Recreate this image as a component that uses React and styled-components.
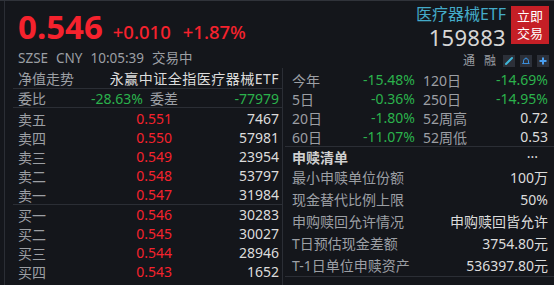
import React from 'react';
import styled, { createGlobalStyle } from 'styled-components';

const GlobalStyle = createGlobalStyle`
  html, body {
    margin: 0;
    padding: 0;
    background: #14161b;
  }
  * { box-sizing: border-box; }
`;

const FONT = `"Noto Sans", "Noto Sans CJK SC", sans-serif`;
const RED = '#f5222d';
const GREEN = '#2bb24c';
const LABEL = '#9c9fa4';
const VALUE = '#dcdcdc';
const LINE = '#2b2e35';

const Screen = styled.div`
  width: 554px;
  height: 285px;
  overflow: hidden;
  background: #14161b;
  border-top: 1px solid #30333a;
  padding-left: 4px;
  font-family: ${FONT};
`;

const Frame = styled.div`
  height: 100%;
  border-left: 1px solid ${LINE};
`;

const Header = styled.div`
  height: 67px;
  display: flex;
  justify-content: space-between;
  padding: 0 5px 0 13px;
`;

const Quote = styled.div`
  display: flex;
  flex-direction: column;
  padding-top: 8px;
`;

const PriceLine = styled.div`
  display: flex;
  align-items: baseline;
  gap: 10px;
  color: ${RED};
`;

const BigPrice = styled.span`
  font-size: 33px;
  font-weight: 700;
  line-height: 35px;
`;

const Change = styled.span`
  font-size: 18.5px;
  font-weight: 500;
  margin-left: ${p => p.$gap || 0}px;
`;

const Status = styled.div`
  margin-top: 6px;
  display: flex;
  gap: 8px;
  color: ${LABEL};
  font-size: 13.5px;
  line-height: 16px;
`;

const Ident = styled.div`
  display: flex;
  flex-direction: column;
  align-items: flex-end;
  padding-top: 3px;
`;

const IdentTop = styled.div`
  display: flex;
  gap: 5px;
`;

const Names = styled.div`
  display: flex;
  flex-direction: column;
  align-items: flex-end;
`;

const FundName = styled.div`
  color: #44aac8;
  font-size: 16px;
  line-height: 21px;
`;

const Code = styled.div`
  color: #d6d6d6;
  font-size: 22px;
  line-height: 24px;
  letter-spacing: 0.3px;
`;

const TradeButton = styled.div`
  width: 38px;
  height: 38px;
  margin-top: 2px;
  background: #c51f26;
  color: #fff;
  font-size: 13px;
  line-height: 17px;
  display: flex;
  flex-direction: column;
  align-items: center;
  justify-content: center;
`;

const Tools = styled.div`
  margin-top: 5px;
  display: flex;
  align-items: center;
  gap: 5px;
  color: ${LABEL};
  font-size: 12px;
  line-height: 14px;
`;

const ToolText = styled.span`
  margin-right: ${p => p.$mr || 2}px;
`;

const IconBox = styled.span`
  width: 12px;
  height: 12px;
  background: #2c3039;
  display: inline-flex;
  align-items: center;
  justify-content: center;
`;

const Body = styled.div`
  display: grid;
  grid-template-columns: 278px 1fr;
`;

const LeftPanel = styled.div`
  padding-left: 8px;
  border-right: 1px solid ${LINE};
`;

const RightPanel = styled.div`
  padding-left: 2px;
`;

const Row = styled.div`
  height: ${p => p.$h || 19}px;
  display: flex;
  align-items: center;
  padding: 0 ${p => p.$pr ?? 3}px 0 ${p => p.$pl ?? 5}px;
  font-size: 14px;
  white-space: nowrap;
  border-bottom: ${p => (p.$line ? `1px solid ${LINE}` : 'none')};
`;

const Label = styled.span`
  color: ${p => p.$color || LABEL};
  width: ${p => (p.$w ? `${p.$w}px` : 'auto')};
  font-weight: ${p => (p.$bold ? 700 : 400)};
  margin-left: ${p => p.$ml || 0}px;
  flex: ${p => (p.$grow ? 1 : 'none')};
`;

const Value = styled.span`
  color: ${p => p.$color || VALUE};
  width: ${p => (p.$w ? `${p.$w}px` : 'auto')};
  flex: ${p => (p.$grow ? 1 : 'none')};
  text-align: right;
  letter-spacing: ${p => p.$ls || 0}px;
`;

const Block = styled.div`
  padding-top: ${p => p.$pt || 0}px;
  border-bottom: ${p => (p.$line ? `1px solid ${LINE}` : 'none')};
`;

const Pen = () => (
  <svg width="10" height="10" viewBox="0 0 10 10">
    <path d="M2 8 L8 2" stroke="#3fb6d8" strokeWidth="2" strokeLinecap="round" />
  </svg>
);

const Bell = () => (
  <svg width="10" height="10" viewBox="0 0 10 10" fill="none">
    <path d="M2.5 7.5 V5 a2.5 2.5 0 0 1 5 0 V7.5 H1.5 H8.5" stroke="#3a8fdc" strokeWidth="1" />
    <path d="M5 1.5 V2.5" stroke="#3a8fdc" strokeWidth="1" />
  </svg>
);

const Plus = () => (
  <svg width="10" height="10" viewBox="0 0 10 10">
    <path d="M5 1.5 V8.5 M1.5 5 H8.5" stroke="#4a9ff0" strokeWidth="2" />
  </svg>
);

const asks = [
  ['卖五', '0.551', '7467'],
  ['卖四', '0.550', '57981'],
  ['卖三', '0.549', '23954'],
  ['卖二', '0.548', '53797'],
  ['卖一', '0.547', '31984'],
];

const bids = [
  ['买一', '0.546', '30283'],
  ['买二', '0.545', '30027'],
  ['买三', '0.544', '28946'],
  ['买四', '0.543', '1652'],
  ['买五', '0.542', '6004'],
];

const stats = [
  ['今年', '-15.48%', GREEN, '120日', '-14.69%', GREEN],
  ['5日', '-0.36%', GREEN, '250日', '-14.95%', GREEN],
  ['20日', '-1.80%', GREEN, '52周高', '0.72', VALUE],
  ['60日', '-11.07%', GREEN, '52周低', '0.53', VALUE],
];

const redemption = [
  ['最小申赎单位份额', '100万'],
  ['现金替代比例上限', '50%'],
  ['申购赎回允许情况', '申购赎回皆允许'],
  ['T日预估现金差额', '3754.80元'],
  ['T-1日单位申赎资产', '536397.80元'],
];

const BookRow = ({ row }) => (
  <Row>
    <Label $w={60}>{row[0]}</Label>
    <Value $w={94} $color={RED}>{row[1]}</Value>
    <Value $grow>{row[2]}</Value>
  </Row>
);

export default function App() {
  return (
    <>
      <GlobalStyle />
      <Screen>
        <Frame>
          <Header>
            <Quote>
              <PriceLine>
                <BigPrice>0.546</BigPrice>
                <Change>+0.010</Change>
                <Change $gap={2}>+1.87%</Change>
              </PriceLine>
              <Status>
                <span>SZSE</span>
                <span>CNY</span>
                <span>10:05:39</span>
                <span>交易中</span>
              </Status>
            </Quote>
            <Ident>
              <IdentTop>
                <Names>
                  <FundName>医疗器械ETF</FundName>
                  <Code>159883</Code>
                </Names>
                <TradeButton>
                  <span>立即</span>
                  <span>交易</span>
                </TradeButton>
              </IdentTop>
              <Tools>
                <ToolText $mr={4}>通</ToolText>
                <ToolText>融</ToolText>
                <IconBox><Pen /></IconBox>
                <IconBox><Bell /></IconBox>
                <IconBox><Plus /></IconBox>
              </Tools>
            </Ident>
          </Header>
          <Body>
            <LeftPanel>
              <Row $h={21} $line>
                <Label $grow>净值走势</Label>
                <Value $ls={0.5}>永赢中证全指医疗器械ETF</Value>
              </Row>
              <Row $h={19} $line>
                <Label $w={40}>委比</Label>
                <Value $w={85} $color={GREEN}>-28.63%</Value>
                <Label $w={40} $ml={7}>委差</Label>
                <Value $grow $color={GREEN}>-77979</Value>
              </Row>
              <Block $pt={1} $line>
                {asks.map(r => <BookRow key={r[0]} row={r} />)}
              </Block>
              <Block>
                {bids.map(r => <BookRow key={r[0]} row={r} />)}
              </Block>
            </LeftPanel>
            <RightPanel>
              <Block $pt={2} $line>
                {stats.map(s => (
                  <Row key={s[0]} $pl={7} $pr={6}>
                    <Label $w={40}>{s[0]}</Label>
                    <Value $w={83} $color={s[2]}>{s[1]}</Value>
                    <Label $w={50} $ml={8}>{s[3]}</Label>
                    <Value $grow $color={s[5]}>{s[4]}</Value>
                  </Row>
                ))}
              </Block>
              <Row $h={19} $pl={7} $pr={16}>
                <Label $grow $color="#d0d0d0" $bold>申赎清单</Label>
                <Value>···</Value>
              </Row>
              <Block $line>
                {redemption.map(r => (
                  <Row key={r[0]} $h={22} $pl={7} $pr={6}>
                    <Label $grow>{r[0]}</Label>
                    <Value>{r[1]}</Value>
                  </Row>
                ))}
              </Block>
            </RightPanel>
          </Body>
        </Frame>
      </Screen>
    </>
  );
}
